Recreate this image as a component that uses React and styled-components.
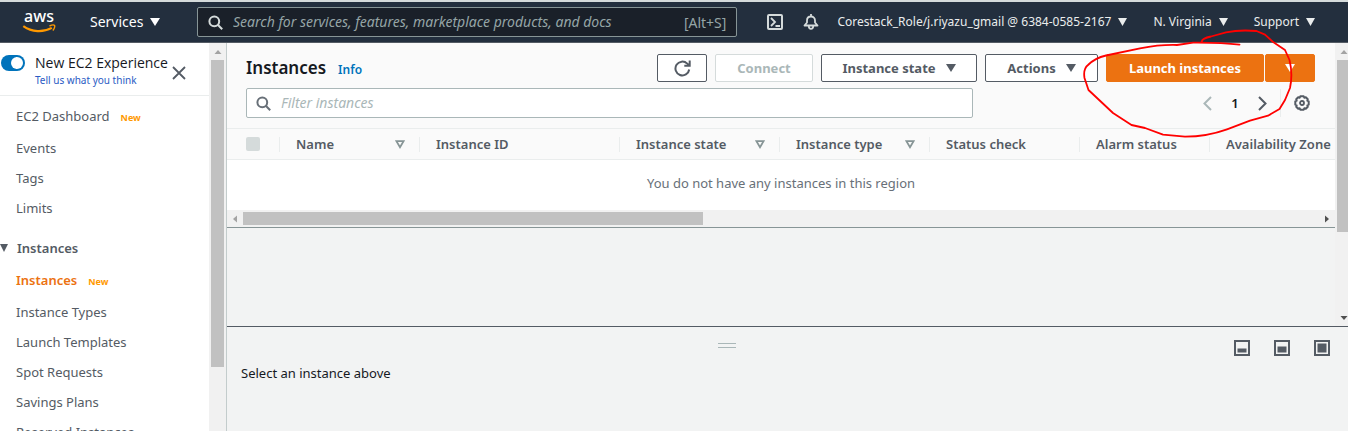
import React from "react";
import styled, { createGlobalStyle, css } from "styled-components";

const GlobalStyle = createGlobalStyle`
  *, *::before, *::after { box-sizing: border-box; }
  body { margin: 0; background: #fff; }
  body, button, input, table { font-family: "Noto Sans", "Open Sans", sans-serif; }
  button { cursor: pointer; }
`;

const Page = styled.div`
  position: relative;
  display: flex;
  flex-direction: column;
  height: 100vh;
  overflow: hidden;
  border-top: 2px solid #d5dbdb;
  font-size: 13px;
  color: #16191f;
`;

/* ---------- top navigation ---------- */

const TopNav = styled.header`
  display: flex;
  align-items: center;
  flex: none;
  height: 41px;
  padding: 0 33px 0 22px;
  background: #232f3e;
  border-bottom: 1px solid #545b64;
`;

const Logo = styled.a`
  display: flex;
  width: 36px;
  height: 34px;
`;

const NavButton = styled.button`
  display: flex;
  align-items: center;
  gap: 7px;
  padding: 0;
  border: 0;
  background: none;
  color: ${(p) => (p.$strong ? "#fff" : "#eaeded")};
  font-size: ${(p) => (p.$strong ? 14 : 12)}px;
  line-height: 20px;
  white-space: nowrap;
`;

const NavMenus = styled.nav`
  display: flex;
  align-items: center;
  gap: 26px;
  margin-left: 30px;
`;

const NavIcons = styled.div`
  display: flex;
  gap: 20px;
  margin-right: -8px;
`;

const ServicesSlot = styled.div`
  flex: none;
  width: 107px;
  margin-left: 32px;
`;

const SearchBox = styled.label`
  display: flex;
  align-items: center;
  gap: 10px;
  flex: 1;
  height: 30px;
  padding: 0 10px;
  background: #1a2029;
  border: 1px solid #879596;
  border-radius: 2px;
  color: #d5dbdb;
`;

const FilterBox = styled(SearchBox)`
  flex: none;
  width: 68%;
  padding: 0 9px;
  background: #fff;
  border-color: #aab7b8;
  color: #687078;
`;

const TextInput = styled.input`
  flex: 1;
  min-width: 0;
  padding: 0;
  border: 0;
  outline: 0;
  background: none;
  color: inherit;
  font-size: 14px;
  line-height: 20px;
  &::placeholder {
    color: ${(p) => (p.$dark ? "#95a5a6" : "#aab7b8")};
    font-style: italic;
    opacity: 1;
  }
`;

const Shortcut = styled.span`
  color: #95a5a6;
  font-size: 14px;
`;

/* ---------- scroll bars ---------- */

const barColor = "#c1c1c1";

const VBar = styled.div`
  display: flex;
  flex-direction: column;
  align-items: center;
  flex: none;
  width: 17px;
  background: #f1f1f1;
`;

const HBar = styled.div`
  display: flex;
  align-items: center;
  height: 17px;
  background: #f1f1f1;
`;

const BarArrow = styled.span`
  display: flex;
  align-items: center;
  justify-content: center;
  flex: none;
  width: ${(p) => (p.$side ? 16 : 17)}px;
  height: 17px;
`;

const VThumb = styled.div`
  flex: none;
  width: 13px;
  height: ${(p) => p.$size};
  margin-bottom: auto;
  background: ${barColor};
`;

const HThumb = styled.div`
  width: 460px;
  height: 13px;
  margin-right: auto;
  background: ${barColor};
`;

/* ---------- side navigation ---------- */

const Body = styled.div`
  display: flex;
  flex: 1;
  min-height: 0;
`;

const Sidebar = styled.aside`
  display: flex;
  flex: none;
  width: 227px;
  border-right: 1px solid #c3cccc;
`;

const SideContent = styled.div`
  flex: 1;
  overflow: hidden;
`;

const Experience = styled.div`
  display: flex;
  align-items: flex-start;
  height: 53px;
  padding: 10px 23px 0 1px;
  border-bottom: 1px solid #eaeded;
`;

const Toggle = styled.input`
  appearance: none;
  flex: none;
  display: flex;
  justify-content: flex-end;
  width: 24px;
  height: 16px;
  margin: 2px 10px 0 0;
  padding: 2px;
  border-radius: 8px;
  background: #0073bb;
  &::after {
    content: "";
    width: 12px;
    height: 12px;
    border-radius: 50%;
    background: #fff;
  }
`;

const ExperienceText = styled.div`
  flex: 1;
  display: flex;
  flex-direction: column;
  white-space: nowrap;
  label { font-family: "Open Sans", sans-serif; font-size: 14px; line-height: 20px; }
  a { font-size: 10px; line-height: 14px; color: #2a5bc4; text-decoration: none; }
`;

const IconButton = styled.button`
  display: flex;
  align-items: center;
  justify-content: center;
  flex: none;
  padding: 0;
  border: 0;
  background: none;
  color: ${(p) => p.$color || "#545b64"};
`;

const CloseButton = styled(IconButton)`
  margin-top: 13px;
`;

const NavList = styled.ul`
  list-style: none;
  margin: 0;
  padding: ${(p) => (p.$first ? 5 : 0)}px 0 0 16px;
`;

const NavItem = styled.li`
  height: ${(p) => (p.$isNew ? 32 : 30)}px;
  line-height: 30px;
  white-space: nowrap;
`;

const NavLink = styled.a`
  color: ${(p) => (p.$active ? "#ec7211" : "#545b64")};
  font-weight: ${(p) => (p.$active ? 600 : 400)};
  text-decoration: none;
`;

const NewTag = styled.span`
  margin-left: 11px;
  color: #ff9900;
  font-size: 9px;
  font-weight: 700;
`;

const SectionButton = styled.button`
  display: flex;
  align-items: center;
  gap: 9px;
  height: 30px;
  margin: 10px 0 2px;
  padding: 0;
  border: 0;
  background: none;
  color: #545b64;
  font-size: 13px;
  font-weight: 600;
`;

/* ---------- main area ---------- */

const Main = styled.main`
  display: flex;
  flex-direction: column;
  flex: 1;
  min-width: 0;
  background: #f2f3f3;
`;

const Upper = styled.div`
  display: flex;
  flex: 1;
  min-height: 0;
`;

const UpperContent = styled.div`
  flex: 1;
  min-width: 0;
`;

const ClippedBar = styled.div`
  display: flex;
  flex: none;
  width: 13px;
  overflow: hidden;
`;

const Card = styled.section`
  background: #fafafa;
  border-bottom: 1px solid #879596;
`;

const CardHead = styled.div`
  display: flex;
  flex-direction: column;
  gap: 6px;
  padding: 11px 20px 10px 19px;
`;

const HeadRow = styled.div`
  display: flex;
  align-items: center;
  justify-content: space-between;
`;

const Title = styled.h1`
  display: flex;
  align-items: baseline;
  gap: 12px;
  margin: 0;
  font-size: 17px;
  font-weight: 600;
  line-height: 24px;
  a { color: #0073bb; font-size: 12px; line-height: 20px; text-decoration: none; }
`;

const Actions = styled.div`
  display: flex;
  gap: 8px;
`;

const Button = styled.button`
  display: flex;
  align-items: center;
  justify-content: center;
  gap: 10px;
  min-width: ${(p) => p.$width || 50}px;
  height: 28px;
  padding: 0;
  border: 1px solid #545b64;
  border-radius: 2px;
  background: #fff;
  color: #545b64;
  font-size: 13px;
  font-weight: 700;
  white-space: nowrap;
  &:disabled { border-color: #d5dbdb; color: #aab7b8; }
  ${(p) =>
    p.$primary &&
    css`
      border-color: #ec7211;
      background: #ec7211;
      color: #fff;
    `}
`;

const SplitButton = styled.div`
  display: flex;
  gap: 1px;
`;

const Pager = styled.div`
  display: flex;
  align-items: center;
  height: 28px;
  padding-right: 5px;
  font-size: 13px;
  font-weight: 600;
`;

const PageNumber = styled.span`
  width: 46px;
  text-align: center;
`;

const PagerRule = styled.span`
  width: 1px;
  height: 28px;
  margin: 0 13px;
  background: #eaeded;
`;

const Table = styled.table`
  width: 100%;
  table-layout: fixed;
  border-collapse: separate;
  border-spacing: 0;
`;

const Th = styled.th`
  width: ${(p) => (p.$width ? `${p.$width}px` : "auto")};
  height: 32px;
  padding: 0;
  border-top: 1px solid #eaeded;
  border-bottom: 1px solid #eaeded;
  overflow: hidden;
  color: #545b64;
  font-weight: 600;
  text-align: left;
  white-space: nowrap;
`;

const ThInner = styled.div`
  display: flex;
  align-items: center;
  justify-content: space-between;
  height: 15px;
  padding: 0 14px 0 16px;
  border-left: 1px solid #eaeded;
`;

const CheckBox = styled.input`
  appearance: none;
  display: block;
  width: 14px;
  height: 14px;
  margin: 0 0 0 19px;
  border-radius: 2px;
  background: #d5dbdb;
`;

const EmptyCell = styled.td`
  height: 50px;
  padding: 0 0 4px;
  background: #fff;
  color: #687078;
  text-align: center;
`;

const SplitPanel = styled.section`
  flex: none;
  height: 105px;
  border-top: 1px solid #545b64;
`;

const PanelBar = styled.div`
  display: flex;
  align-items: center;
  padding: 13px 18px 0 0;
`;

const Grip = styled.div`
  flex: 1;
  display: flex;
  justify-content: center;
  margin-top: -6px;
  &::after {
    content: "";
    width: 18px;
    height: 5px;
    border: solid #aab7b8;
    border-width: 1px 0;
  }
`;

const PanelIcons = styled.div`
  display: flex;
  gap: 24px;
  padding-left: 7px;
`;

const PanelText = styled.p`
  margin: 7px 14px;
  line-height: 20px;
`;

const Annotation = styled.svg`
  position: absolute;
  top: 26px;
  right: 48px;
  pointer-events: none;
`;

/* ---------- icons ---------- */

const Caret = ({ w = 10, h = 8 }) => (
  <svg width={w} height={h} viewBox="0 0 10 8" fill="currentColor" preserveAspectRatio="none" aria-hidden="true">
    <path d="M0 0h10L5 8z" />
  </svg>
);

const SortIcon = () => (
  <svg width="10" height="9" viewBox="0 0 10 9" fill="none" stroke="#879596" strokeWidth="1.8" aria-hidden="true">
    <path d="M1.4 1.2h7.2L5 7.2z" />
  </svg>
);

const SearchIcon = () => (
  <svg width="15" height="15" viewBox="0 0 15 15" fill="none" stroke="currentColor" strokeWidth="2" aria-hidden="true">
    <circle cx="6.3" cy="6.3" r="4.9" />
    <path d="M9.8 9.8l4.4 4.4" />
  </svg>
);

const AwsLogo = () => (
  <svg width="36" height="34" viewBox="0 -4 36 34" aria-hidden="true">
    <text x="17" y="13" textAnchor="middle" fontFamily="Noto Sans, sans-serif" fontSize="16" fontWeight="500" fill="#fff">aws</text>
    <path d="M1.300 17.200c8.500 6.200 20 6.400 28.500 1.700" fill="none" stroke="#f90" strokeWidth="2.200" />
    <path d="M27.500 17c2-1 4.500-1.200 5.100-.600.500.7-.200 3.500-1.800 5.100" fill="none" stroke="#f90" strokeWidth="1.400" />
  </svg>
);

const TerminalIcon = () => (
  <svg width="16" height="16" viewBox="0 0 16 16" fill="none" stroke="currentColor" strokeWidth="2" aria-hidden="true">
    <rect x="1" y="1" width="14" height="14" rx="1" />
    <path d="M4 4l4 4-4 4M8.500 12H13" strokeWidth="1.800" />
  </svg>
);

const BellIcon = () => (
  <svg width="16" height="16" viewBox="0 0 16 16" fill="none" stroke="currentColor" strokeWidth="1.800" strokeLinejoin="round" aria-hidden="true">
    <path d="M8 0v2.500M1.500 11.500h13L12 8.500V6.500C12 4 10.300 2.500 8 2.500S4 4 4 6.500v2z" />
    <path d="M5.800 12c0 3.800 4.400 3.800 4.400 0" />
  </svg>
);

const CloseIcon = () => (
  <svg width="14" height="14" viewBox="0 0 14 14" stroke="currentColor" strokeWidth="1.800" aria-hidden="true">
    <path d="M1 1l12 12M13 1L1 13" />
  </svg>
);

const RefreshIcon = () => (
  <svg width="17" height="17" viewBox="0 0 17 17" fill="none" stroke="currentColor" strokeWidth="2" aria-hidden="true">
    <path d="M15.200 9.500A6.900 6.900 0 1 1 13.200 3.600L15 5.200" />
    <path d="M15.700 0.500v5.200h-5.400" />
  </svg>
);

const Chevron = ({ flip }) => (
  <svg width="9" height="15" viewBox="0 0 9 15" fill="none" stroke="currentColor" strokeWidth="2" aria-hidden="true">
    <path d={flip ? "M8 1L1.500 7.500 8 14" : "M1 1l6.500 6.500L1 14"} />
  </svg>
);

const GearIcon = () => (
  <svg width="16" height="16" viewBox="0 0 16 16" fill="none" stroke="currentColor" strokeLinejoin="round" aria-hidden="true">
    <path strokeWidth="2" d="M6.300 1.300h3.400l.6 1.400 1.500-.5 2 2-.5 1.500 1.400.6v3.400l-1.400.6.5 1.500-2 2-1.500-.5-.6 1.400H6.300l-.6-1.400-1.500.5-2-2 .5-1.500-1.400-.6V6.300l1.400-.6-.5-1.500 2-2 1.500.5z" />
    <circle cx="8" cy="8" r="2" strokeWidth="1.800" />
  </svg>
);

const PanelIcon = ({ fill }) => (
  <svg width="16" height="16" viewBox="0 0 16 16" aria-hidden="true">
    <rect x="1" y="1" width="14" height="14" fill="none" stroke="currentColor" strokeWidth="2" />
    <rect x="3.500" y={12.500 - fill} width="9" height={fill} fill="currentColor" />
  </svg>
);

const ScrollArrow = ({ dir, color = "#a3a3a3" }) => {
  const turn = { up: 0, right: 90, down: 180, left: 270 }[dir];
  return (
    <svg width="8" height="8" viewBox="0 0 8 8" fill={color} aria-hidden="true">
      <path d="M0.500 6L4 2l3.500 4z" transform={`rotate(${turn} 4 4)`} />
    </svg>
  );
};

/* ---------- page ---------- */

const topLinks = [
  { label: "EC2 Dashboard", isNew: true },
  { label: "Events" },
  { label: "Tags" },
  { label: "Limits" },
];

const instanceLinks = [
  { label: "Instances", isNew: true, active: true },
  { label: "Instance Types" },
  { label: "Launch Templates" },
  { label: "Spot Requests" },
  { label: "Savings Plans" },
  { label: "Reserved Instances", isNew: true },
];

const columns = [
  { label: "Name", width: 140, sort: true },
  { label: "Instance ID", width: 200 },
  { label: "Instance state", width: 160, sort: true },
  { label: "Instance type", width: 150, sort: true },
  { label: "Status check", width: 150 },
  { label: "Alarm status", width: 130 },
  { label: "Availability Zone" },
];

const Links = ({ items, first }) => (
  <NavList $first={first}>
    {items.map((item) => (
      <NavItem key={item.label} $isNew={item.isNew}>
        <NavLink href="#" $active={item.active}>{item.label}</NavLink>
        {item.isNew && <NewTag>New</NewTag>}
      </NavItem>
    ))}
  </NavList>
);

const VerticalBar = ({ size, endColor }) => (
  <VBar>
    <BarArrow><ScrollArrow dir="up" /></BarArrow>
    <VThumb $size={size} />
    {endColor && <BarArrow><ScrollArrow dir="down" color={endColor} /></BarArrow>}
  </VBar>
);

export default function App() {
  return (
    <Page>
      <GlobalStyle />
      <TopNav>
        <Logo href="#" aria-label="AWS home"><AwsLogo /></Logo>
        <ServicesSlot>
          <NavButton $strong>Services <Caret /></NavButton>
        </ServicesSlot>
        <SearchBox>
          <SearchIcon />
          <TextInput $dark type="search" aria-label="Search" placeholder="Search for services, features, marketplace products, and docs" />
          <Shortcut>[Alt+S]</Shortcut>
        </SearchBox>
        <NavMenus>
          <NavIcons>
            <IconButton $color="#d5dbdb" aria-label="CloudShell"><TerminalIcon /></IconButton>
            <IconButton $color="#d5dbdb" aria-label="Notifications"><BellIcon /></IconButton>
          </NavIcons>
          <NavButton>Corestack_Role/j.riyazu_gmail @ 6384-0585-2167 <Caret w={9} /></NavButton>
          <NavButton>N. Virginia <Caret w={9} /></NavButton>
          <NavButton>Support <Caret w={9} /></NavButton>
        </NavMenus>
      </TopNav>

      <Body>
        <Sidebar>
          <SideContent>
            <Experience>
              <Toggle id="experience" type="checkbox" role="switch" defaultChecked />
              <ExperienceText>
                <label htmlFor="experience">New EC2 Experience</label>
                <a href="#">Tell us what you think</a>
              </ExperienceText>
              <CloseButton aria-label="Close"><CloseIcon /></CloseButton>
            </Experience>
            <Links items={topLinks} first />
            <SectionButton><Caret w={8} />Instances</SectionButton>
            <Links items={instanceLinks} />
          </SideContent>
          <VerticalBar size="307px" />
        </Sidebar>

        <Main>
          <Upper>
            <UpperContent>
              <Card>
                <CardHead>
                  <HeadRow>
                    <Title>Instances <a href="#">Info</a></Title>
                    <Actions>
                      <Button aria-label="Refresh"><RefreshIcon /></Button>
                      <Button $width={98} disabled>Connect</Button>
                      <Button $width={156}>Instance state <Caret /></Button>
                      <Button $width={113}>Actions <Caret /></Button>
                      <SplitButton>
                        <Button $primary $width={158}>Launch instances</Button>
                        <Button $primary aria-label="More launch options"><Caret /></Button>
                      </SplitButton>
                    </Actions>
                  </HeadRow>
                  <HeadRow>
                    <FilterBox>
                      <SearchIcon />
                      <TextInput type="search" aria-label="Filter instances" placeholder="Filter instances" />
                    </FilterBox>
                    <Pager>
                      <IconButton $color="#aab7b8" aria-label="Previous page"><Chevron flip /></IconButton>
                      <PageNumber>1</PageNumber>
                      <IconButton aria-label="Next page"><Chevron /></IconButton>
                      <PagerRule />
                      <IconButton aria-label="Preferences"><GearIcon /></IconButton>
                    </Pager>
                  </HeadRow>
                </CardHead>
                <Table>
                  <thead>
                    <tr>
                      <Th $width={52}><CheckBox type="checkbox" aria-label="Select all" disabled /></Th>
                      {columns.map((c) => (
                        <Th key={c.label} $width={c.width}>
                          <ThInner>{c.label}{c.sort && <SortIcon />}</ThInner>
                        </Th>
                      ))}
                    </tr>
                  </thead>
                  <tbody>
                    <tr>
                      <EmptyCell colSpan={8}>You do not have any instances in this region</EmptyCell>
                    </tr>
                  </tbody>
                </Table>
                <HBar>
                  <BarArrow $side><ScrollArrow dir="left" /></BarArrow>
                  <HThumb />
                  <BarArrow $side><ScrollArrow dir="right" color="#505050" /></BarArrow>
                </HBar>
              </Card>
            </UpperContent>
            <ClippedBar><VerticalBar size="172px" endColor="#505050" /></ClippedBar>
          </Upper>
          <SplitPanel>
            <PanelBar>
              <Grip />
              <PanelIcons>
                <IconButton aria-label="Small panel"><PanelIcon fill={4} /></IconButton>
                <IconButton aria-label="Medium panel"><PanelIcon fill={6} /></IconButton>
                <IconButton aria-label="Full panel"><PanelIcon fill={9} /></IconButton>
              </PanelIcons>
            </PanelBar>
            <PanelText>Select an instance above</PanelText>
          </SplitPanel>
        </Main>
      </Body>

      <Annotation width="220" height="114" viewBox="1080 28 220 114" fill="none" stroke="#f00" strokeWidth="1.800" strokeLinejoin="round" strokeLinecap="round" aria-hidden="true">
        <path d="M1201.700 41.700C1202 39 1206 37.500 1211 36.500L1226 32.300Q1240 29.500 1256.500 31L1265 34.700 1273.500 42.300 1285 50 1289.500 60Q1293 74 1290 88L1285 100 1279.500 109 1268 115.700 1250 120.700 1227 129.300Q1207 136.500 1185 136.700L1163 134.700 1145 128 1131.500 125 1113 113 1088.500 90 1084.500 78Q1083 69 1088 65 1095 58 1106 55.500L1140 48.300Q1160 44.500 1177 45L1193 42.700Q1222 42.500 1239.500 44.700" />
      </Annotation>
    </Page>
  );
}
